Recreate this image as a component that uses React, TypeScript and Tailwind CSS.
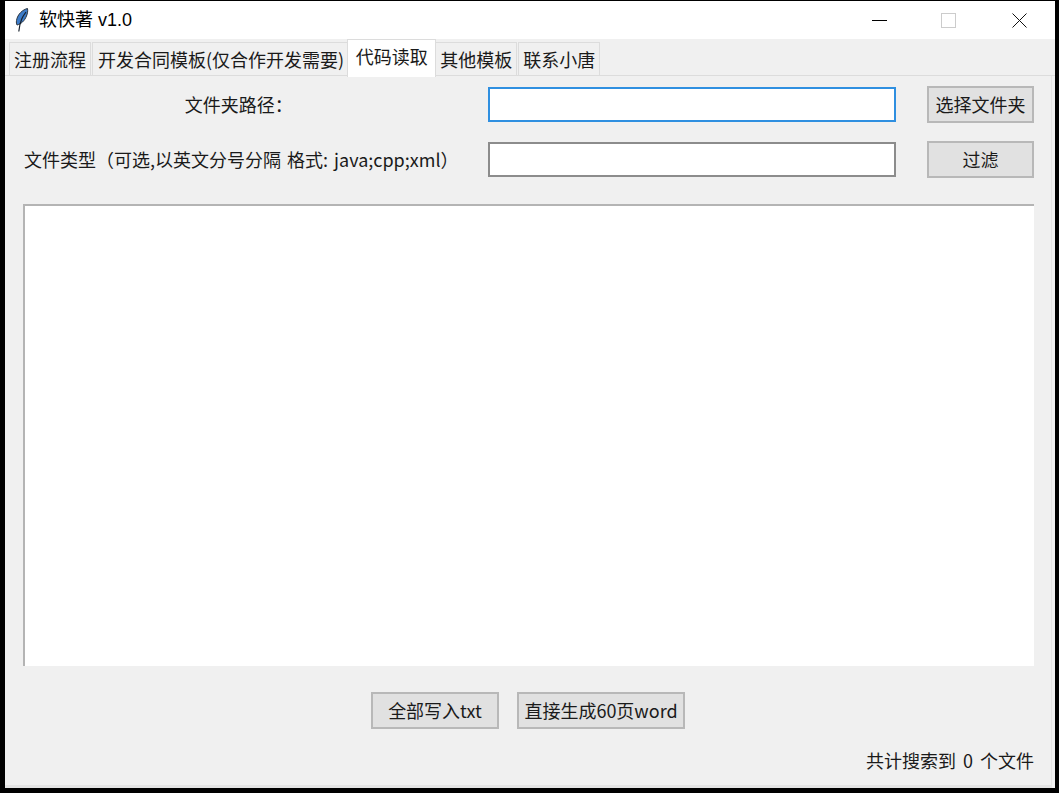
const font = "font-['Noto_Sans_CJK_SC','Liberation_Sans',sans-serif]";

function Tab({ label, active, className = "" }: { label: string; active?: boolean; className?: string }) {
  if (active) {
    return (
      <div className="relative z-10 -mb-px -ml-[2px] flex h-[38px] w-[89px] items-center justify-center border-x border-t border-[#dcdcdc] bg-white pb-1 text-[18px] text-[#1a1a1a]">
        {label}
      </div>
    );
  }
  return (
    <div className={`mt-[3px] flex h-[33px] items-center border-x border-t border-[#dcdcdc] text-[18px] text-[#1a1a1a] ${className}`}>
      {label}
    </div>
  );
}

function Btn({ label, className }: { label: string; className: string }) {
  return (
    <button className={`flex h-[37px] items-center justify-center whitespace-nowrap border-2 border-[#b8b8b8] bg-[#e1e1e1] pb-px text-[18px] text-[#1a1a1a] ${className}`}>
      {label}
    </button>
  );
}

function Feather() {
  return (
    <svg width="14" height="24" viewBox="0 0 14 24">
      <path d="M12.500.5C8 1.500 2.500 6 1.500 12.500c-.3 2 0 3.500.5 4.500 4-1 7.500-4 9.500-9 1-2.500 1.500-5 1-7.500z" fill="#3d7cc9" stroke="#2b3540" strokeWidth="1" />
      <path d="M11 4C8 8 5 12 3.800 23.500" fill="none" stroke="#15202c" strokeWidth="1.200" />
    </svg>
  );
}

export default function App() {
  return (
    <div className={`h-[793px] w-[1059px] overflow-hidden bg-black pb-[5px] pl-[5px] pr-1 pt-px ${font}`}>
      <div className="flex h-full flex-col bg-[#f0f0f0]">
        {/* title bar */}
        <div className="flex h-[38px] shrink-0 items-center bg-white pl-[10px]">
          <Feather />
          <span className="ml-[10px] font-['Liberation_Sans','Noto_Sans_CJK_SC',sans-serif] text-[18px] text-black">软快著 v1.0</span>
          <div className="ml-auto flex items-center">
            <div className="h-px w-[15px] bg-black" />
            <div className="ml-[54px] h-[15px] w-[15px] border border-[#cccccc]" />
            <svg className="ml-[56px] mr-[28px]" width="15" height="15" viewBox="0 0 15 15">
              <path d="M.5.5l14 14M14.500.5l-14 14" stroke="#111" fill="none" />
            </svg>
          </div>
        </div>

        {/* tabs */}
        <div className="flex h-[37px] shrink-0 gap-px border-b border-[#dcdcdc] pl-1">
          <Tab label="注册流程" className="px-1" />
          <Tab label="开发合同模板(仅合作开发需要)" className="pl-[5px] pr-[3px]" />
          <Tab label="代码读取" active />
          <Tab label="其他模板" className="-ml-[2px] px-1" />
          <Tab label="联系小唐" className="px-1" />
        </div>

        {/* form */}
        <div className="mr-[3px] flex min-h-0 flex-1 flex-col border-b-[3px] border-r border-[#e4e4e4] pl-[18px] pr-[17px]">
          <div className="mt-[10px] flex h-[37px] items-center">
            <span className="w-[447px] pr-[15px] text-center text-[18px] text-[#1a1a1a]">文件夹路径：</span>
            <input className="ml-[18px] h-[35px] w-[409px] border-2 border-[#2f8fe0] bg-white" />
            <Btn label="选择文件夹" className="ml-[31px] w-[107px]" />
          </div>
          <div className="mt-[18px] flex h-[37px] items-center">
            <span className="w-[447px] whitespace-nowrap pl-px text-[18px] text-[#1a1a1a] [word-spacing:2px]">文件类型（可选,以英文分号分隔 格式: java;cpp;xml）</span>
            <input className="ml-[18px] h-[35px] w-[409px] border-2 border-[#8c8c8c] bg-white" />
            <Btn label="过滤" className="ml-[31px] w-[107px]" />
          </div>
          <div className="mt-[26px] h-[462px] border-l-2 border-t-2 border-[#b4b4b4] bg-white" />
          <div className="mt-[26px] flex justify-center gap-[18px] pr-[1px]">
            <Btn label="全部写入txt" className="w-[128px]" />
            <Btn label="直接生成60页word" className="w-[168px]" />
          </div>
          <div className="mt-[18px] whitespace-nowrap text-right text-[18px] text-[#1a1a1a] [word-spacing:3px]">共计搜索到 0 个文件</div>
        </div>
      </div>
    </div>
  );
}
